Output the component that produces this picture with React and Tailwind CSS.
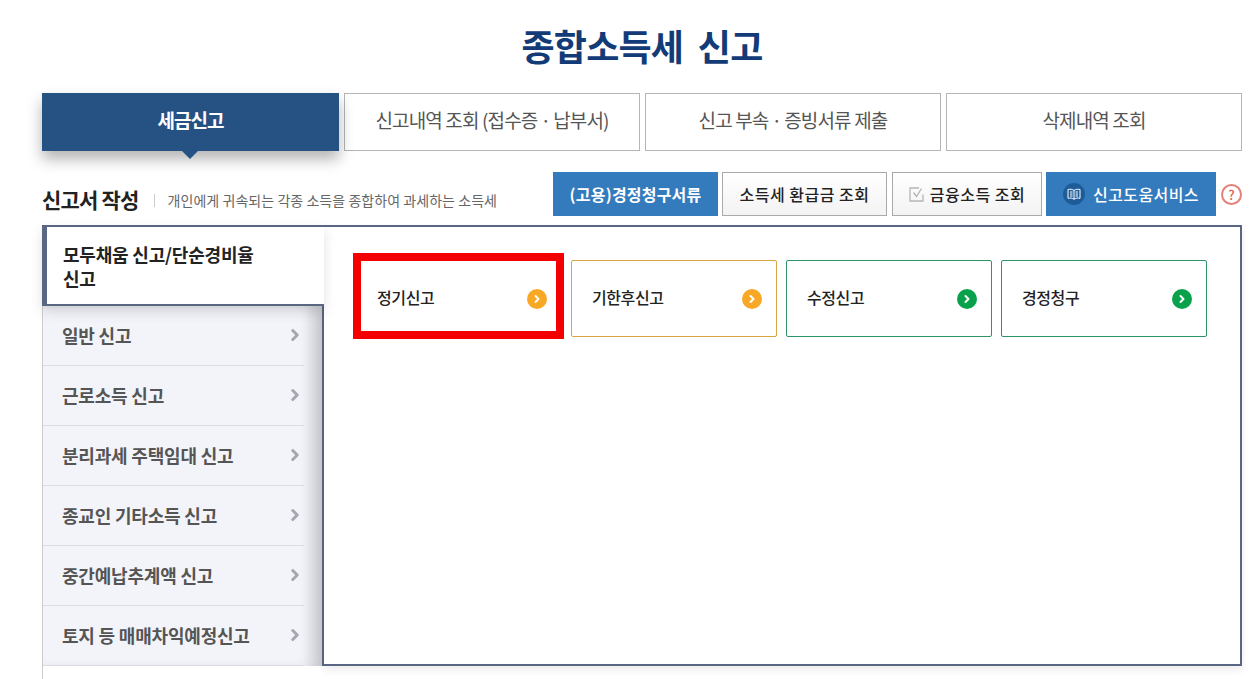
import { ChevronRight } from "lucide-react";

const font = { fontFamily: '"Noto Sans CJK KR", "Noto Sans", sans-serif' };

const tabs = ["신고내역 조회 (접수증\u2009·\u2009납부서)", "신고 부속\u2009·\u2009증빙서류 제출", "삭제내역 조회"];
const sideItems = ["일반 신고", "근로소득 신고", "분리과세 주택임대 신고", "종교인 기타소득 신고", "중간예납추계액 신고", "토지 등 매매차익예정신고"];
const cards = [
  { name: "정기신고", border: "border-[#d9a441]", dot: "bg-[#f9a825]", marked: true },
  { name: "기한후신고", border: "border-[#d9a441]", dot: "bg-[#f9a825]" },
  { name: "수정신고", border: "border-[#2e9468]", dot: "bg-[#0aa14b]" },
  { name: "경정청구", border: "border-[#2e9468]", dot: "bg-[#0aa14b]" },
];

const App = () => {
  return (
    <div style={font} className="h-[679px] w-[1259px] overflow-hidden bg-white pl-[42px]">
      <div className="w-[1200px]">
        <h1 className="h-[93px] pt-[19px] text-center text-[36px] leading-[52px] font-bold tracking-[-0.8px] text-[#123b77]">
          종합소득세&nbsp; 신고
        </h1>

        {/* Tabs */}
        <div className="flex h-[58px] gap-[5px]">
          <div className="relative flex w-[297px] items-center justify-center bg-[#265283] pb-[3px] text-[19px] font-bold tracking-[-1px] text-white shadow-[0_8px_14px_rgba(0,0,0,0.3)]">
            세금신고
            <span className="absolute top-full left-[140px] h-0 w-0 border-x-[8px] border-t-[8px] border-x-transparent border-t-[#265283]" />
          </div>
          {tabs.map((tab) => (
            <div key={tab} className="flex flex-1 items-center justify-center border border-[#b5b5b5] pb-[3px] text-[19px] tracking-[-0.85px] text-[#555]">
              {tab}
            </div>
          ))}
        </div>

        {/* Heading row */}
        <div className="mt-[21px] flex h-[44px] items-center">
          <strong className="mt-[12px] text-[21px] font-bold tracking-[-0.8px] text-[#222]">신고서 작성</strong>
          <span className="mt-[12px] ml-[15px] h-[13px] w-px bg-[#ccc]" />
          <span className="mt-[12px] ml-[13px] text-[14px] tracking-[0.05px] text-[#666]">개인에게 귀속되는 각종 소득을 종합하여 과세하는 소득세</span>
          <div className="ml-auto flex h-full items-center">
            <button className="flex h-full w-[165px] items-center justify-center bg-[#347bbd] text-[16px] font-bold tracking-[0.2px] text-white">(고용)경정청구서류</button>
            <button className="ml-[4px] flex h-full w-[165px] items-center justify-center border border-[#aaa] bg-gradient-to-b from-white to-[#f3f3f3] text-[16px] font-medium tracking-[0.5px] text-[#222]">소득세 환급금 조회</button>
            <button className="ml-[5px] flex h-full w-[150px] items-center justify-center gap-[5px] border border-[#aaa] bg-gradient-to-b from-white to-[#f3f3f3] text-[16px] font-medium tracking-[0.5px] text-[#222]">
              <svg width="16" height="16" viewBox="0 0 16 16" fill="none" stroke="#b5b5b5" strokeWidth="1.3">
                <path d="M14 8.5V15H1V2h9" />
                <path d="M4.500 6.500l3 4 5-8" />
              </svg>
              금융소득 조회
            </button>
            <button className="ml-[4px] flex h-full w-[170px] items-center justify-center gap-[8px] bg-[#347bbd] text-[16px] font-medium tracking-[0.4px] text-white">
              <span className="flex h-[22px] w-[22px] items-center justify-center rounded-full bg-[#1d5c99]">
                <svg width="14" height="12" viewBox="0 0 14 12" fill="none" stroke="#fff" strokeWidth="1">
                  <path d="M7 2.500C5.500 1.200 3 1 1 1.500v8.800c2-.5 4.500-.3 6 1 1.500-1.300 4-1.500 6-1V1.500C11 1 8.500 1.200 7 2.500zM7 2.500v8.800" />
                  <path d="M3 4h2.500M3 6h2.500M3 8h2.500M8.500 4H11M8.500 6H11M8.500 8H11" />
                </svg>
              </span>
              신고도움서비스
            </button>
            <span className="ml-[5px] flex h-[21px] w-[21px] items-center justify-center rounded-full border-2 border-[#e57f7a] text-[13px] leading-none font-medium text-[#e0615b]">?</span>
          </div>
        </div>

        {/* Main panel */}
        <div className="mt-[9px] flex items-start">
          <div className="w-[282px] shrink-0">
            <div className="relative z-10 flex h-[81px] flex-col justify-center border-t-2 border-b-2 border-l-[5px] border-[#5a6782] bg-white pr-[60px] pl-[16px] text-[18px] leading-[24px] font-bold tracking-[-0.2px] text-[#222] shadow-[0_6px_12px_rgba(0,0,0,0.12)]">
              모두채움 신고/단순경비율 신고
            </div>
            <ul className="border-r-2 border-l border-r-[#5a6782] border-l-[#ccc] bg-[#f3f4fa] pr-[18px] shadow-[inset_-16px_0_14px_-6px_rgba(0,0,0,0.18)]">
              {sideItems.map((item) => (
                <li key={item} className="flex h-[60px] items-center justify-between border-b border-[#dcdde2] pl-[19px] text-[18px] font-bold tracking-[-0.2px] text-[#555]">
                  {item}
                  <ChevronRight size={18} strokeWidth={4} className="-mt-[2px] text-[#a3a7b0]" />
                </li>
              ))}
            </ul>
            <div className="h-[14px] border-l border-[#ccc]" />
          </div>

          <div className="flex h-[441px] flex-1 items-start gap-[9.33px] border-t-2 border-r-2 border-b-2 border-[#5a6782] pt-[33px] pl-[32px] shadow-[0_4px_8px_rgba(0,0,0,0.08)]">
            {cards.map((card) => (
              <div key={card.name} className={`relative flex h-[77px] w-[205.67px] items-center justify-between rounded-[2px] border ${card.border} pr-[14px] pl-[20px] text-[16px] font-medium tracking-[-0.4px] text-[#222]`}>
                <span className="-mt-[4px]">{card.name}</span>
                <span className={`flex h-[20px] w-[20px] items-center justify-center rounded-full ${card.dot}`}>
                  <ChevronRight size={12} strokeWidth={4} className="text-white" />
                </span>
                {card.marked && <span className="absolute -top-[8px] -right-[3px] -bottom-[3px] -left-[4px] border-[8px] border-[#f40000]" />}
              </div>
            ))}
          </div>
        </div>
      </div>
    </div>
  );
};

export default App;
